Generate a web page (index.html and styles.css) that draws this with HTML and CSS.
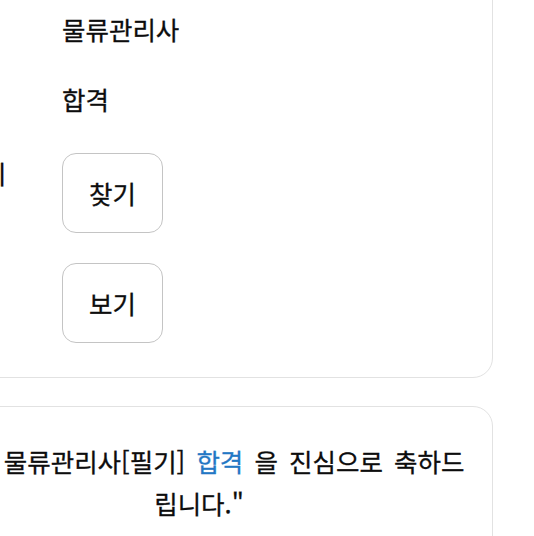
FILE: index.html
```html
<!DOCTYPE html>
<html lang="ko">
<head>
<meta charset="utf-8">
<title>합격 안내</title>
<link rel="stylesheet" href="styles.css">
</head>
<body>
<div class="page">
  <section class="card card-info">
    <div class="rows">
      <div class="row">
        <div class="label">종목</div>
        <div class="value">물류관리사</div>
      </div>
      <div class="row">
        <div class="label">결과</div>
        <div class="value">합격</div>
      </div>
      <div class="row row-first-btn">
        <div class="label">답안지</div>
        <div class="value"><button class="btn" type="button">찾기</button></div>
      </div>
      <div class="row">
        <div class="label">해설</div>
        <div class="value"><button class="btn" type="button">보기</button></div>
      </div>
    </div>
  </section>
  <section class="card card-message">
    <p class="message">"민수 물류관리사[필기] <span class="hl">합격</span> 을 진심으로 축하드립니다."</p>
  </section>
</div>
</body>
</html>
```

FILE: styles.css
```css
html, body {
  margin: 0;
  padding: 0;
  background: #ffffff;
  overflow: hidden;
}

body {
  font-family: "Noto Sans CJK KR", "Noto Sans", sans-serif;
  color: #0d0d0d;
  font-size: 25.5px;
  font-weight: 400;
  -webkit-text-stroke: 0.3px currentColor;
}

.page {
  margin-left: -95px;
  width: 588px;
}

.card {
  box-sizing: border-box;
  border: 1px solid #e2e2e2;
  border-radius: 20px;
  background: #ffffff;
}

.card-info {
  margin-top: -40px;
  padding: 48px 30px 34px 30px;
}

.rows {
  display: flex;
  flex-direction: column;
  gap: 30px;
}

.row {
  display: grid;
  grid-template-columns: 126px 1fr;
  align-items: start;
}

.row-first-btn {
  margin-top: 4px;
}

.label,
.value {
  line-height: 40px;
  height: 40px;
  white-space: nowrap;
}

.value:has(.btn) {
  height: auto;
}

.btn {
  box-sizing: border-box;
  display: flex;
  align-items: center;
  justify-content: center;
  width: 101px;
  height: 80px;
  padding: 0;
  border: 1px solid #c4c4c4;
  border-radius: 14px;
  background: #ffffff;
  font-family: inherit;
  font-size: 25.5px;
  font-weight: 400;
  color: #0d0d0d;
  -webkit-text-stroke: 0.3px currentColor;
  line-height: 1;
}

.card-message {
  margin-top: 28px;
  padding: 33px 20px 40px 20px;
  min-height: 200px;
}

.message {
  margin: 0;
  text-align: center;
  line-height: 42px;
  word-spacing: 4px;
}

.hl {
  color: #2377c4;
}
```
